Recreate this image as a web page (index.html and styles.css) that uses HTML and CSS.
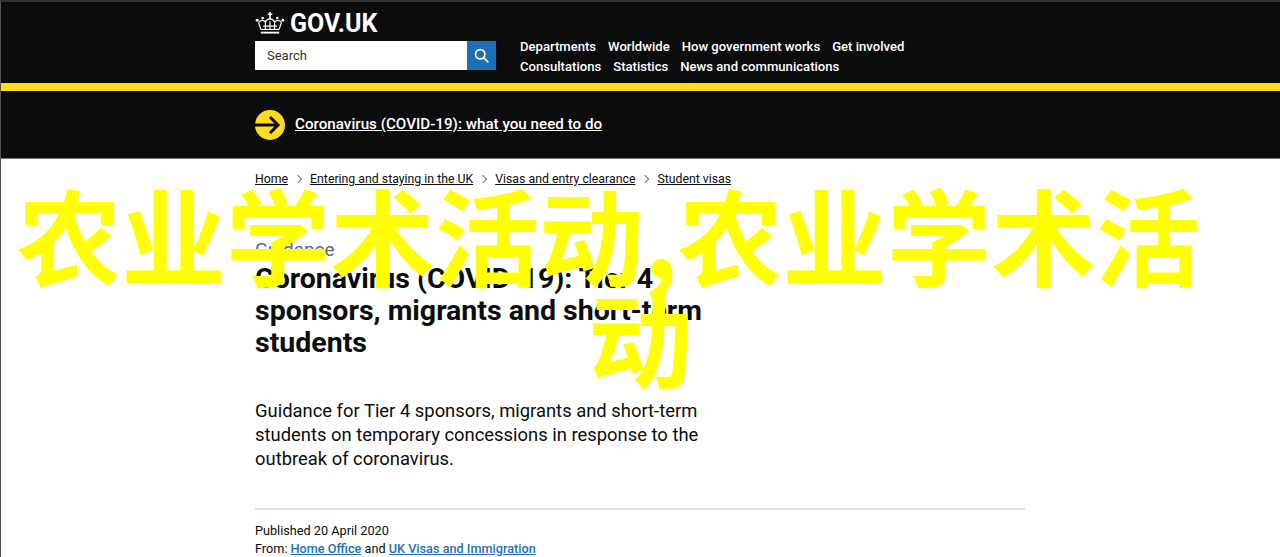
FILE: index.html
```html
<!DOCTYPE html>
<html lang="zh">
<head>
    <meta charset="UTF-8">
    <meta name="viewport" content="width=device-width, initial-scale=1.0">
    <title>农业学术活动</title>
    <link rel="stylesheet" href="styles.css">
</head>
<body>
    <div class="page">
        <header class="top-header">
            <div class="wrap">
                <div class="logo">
                    <svg class="crown" viewBox="0 0 32 24" width="30" height="22" fill="none" stroke="#fff" stroke-width="1.3">
                        <path d="M16 0v8M13.500 2.500h5" stroke-width="1.800"/>
                        <path d="M6 22.500h20" stroke-width="2"/>
                        <path d="M6 19h20"/>
                        <path d="M6 19 3.500 11.500M26 19l2.500-7.500M11 19v-8M21 19v-8M16 19v-9M8.500 15.500h15"/>
                        <path d="M3.500 11.500c2-3 5.500-3 7.500-.5 1-2.500 3-3.500 5-3.500s4 1 5 3.500c2-2.500 5.500-2.500 7.500.5"/>
                        <circle cx="2" cy="9" r="1.600" fill="#fff" stroke="none"/>
                        <circle cx="30" cy="9" r="1.600" fill="#fff" stroke="none"/>
                        <circle cx="8" cy="6.500" r="1.400" fill="#fff" stroke="none"/>
                        <circle cx="24" cy="6.500" r="1.400" fill="#fff" stroke="none"/>
                    </svg>
                    <span class="logo-text">GOV.UK</span>
                </div>
                <div class="header-row">
                    <div class="search">
                        <div class="search-input">Search</div>
                        <div class="search-btn">
                            <svg viewBox="0 0 20 20" width="17" height="17" fill="none" stroke="#fff" stroke-width="2">
                                <circle cx="8.500" cy="8.500" r="5.500"/>
                                <path d="M12.500 12.500 18 18"/>
                            </svg>
                        </div>
                    </div>
                    <nav class="top-nav">
                        <div class="nav-line">
                            <a>Departments</a>
                            <a>Worldwide</a>
                            <a>How government works</a>
                            <a>Get involved</a>
                        </div>
                        <div class="nav-line">
                            <a>Consultations</a>
                            <a>Statistics</a>
                            <a>News and communications</a>
                        </div>
                    </nav>
                </div>
            </div>
        </header>
        <div class="yellow-bar"></div>
        <div class="covid-banner">
            <div class="wrap banner-row">
                <svg class="arrow-icon" viewBox="0 0 30 30" width="30" height="30">
                    <circle cx="15" cy="15" r="15" fill="#ffdd1a"/>
                    <path d="M0 15h23M15 7l8 8-8 8" fill="none" stroke="#0b0c0c" stroke-width="3"/>
                </svg>
                <a class="banner-link">Coronavirus (COVID-19): what you need to do</a>
            </div>
        </div>
        <main class="wrap content">
            <div class="breadcrumbs">
                <a>Home</a><span class="chevron"></span>
                <a>Entering and staying in the UK</a><span class="chevron"></span>
                <a>Visas and entry clearance</a><span class="chevron"></span>
                <a>Student visas</a>
            </div>
            <div class="caption">Guidance</div>
            <h1 class="doc-title">Coronavirus (COVID-19): Tier 4 sponsors, migrants and short-term students</h1>
            <p class="lead">Guidance for Tier 4 sponsors, migrants and short-term students on temporary concessions in response to the outbreak of coronavirus.</p>
            <div class="meta">
                <div>Published 20 April 2020</div>
                <div>From: <a class="meta-link">Home Office</a> and <a class="meta-link">UK Visas and Immigration</a></div>
            </div>
        </main>
        <div class="big-title">
            <div class="big-line">农业学术活动,农业学术活</div>
            <div>动</div>
        </div>
    </div>
</body>
</html>
```

FILE: styles.css
```css
html, body {
    margin: 0;
    padding: 0;
    height: 100%;
    overflow: hidden;
}
body {
    font-family: Roboto, Arial, sans-serif;
    background: #fff;
    color: #0b0c0c;
}
a {
    color: inherit;
}
.page {
    position: relative;
    height: 557px;
    overflow: hidden;
    border-left: 1px solid #555;
    border-top: 2px solid #333;
    box-sizing: border-box;
}
.wrap {
    width: 770px;
    margin-left: 254px;
}
.top-header {
    background: #0b0c0c;
    height: 81px;
    box-sizing: border-box;
    padding-top: 7px;
}
.logo {
    display: flex;
    align-items: center;
    gap: 5px;
    height: 28px;
}
.logo-text {
    color: #fff;
    font-size: 25px;
    font-weight: 700;
}
.header-row {
    display: flex;
    margin-top: 4px;
}
.search {
    display: flex;
    width: 241px;
    height: 29px;
}
.search-input {
    width: 212px;
    background: #fff;
    font-size: 13px;
    line-height: 29px;
    padding-left: 12px;
    box-sizing: border-box;
    color: #333;
}
.search-btn {
    width: 29px;
    background: #1d70b8;
    display: flex;
    align-items: center;
    justify-content: center;
}
.top-nav {
    margin-left: 24px;
    color: #fff;
    font-size: 13.100px;
    font-weight: 500;
    margin-top: -4px;
}
.nav-line {
    display: flex;
    gap: 12px;
    line-height: 19.500px;
}
.yellow-bar {
    height: 8px;
    background: #ffdd1a;
}
.covid-banner {
    background: #0b0c0c;
    height: 67px;
    border-bottom: 1px solid #777;
}
.banner-row {
    display: flex;
    align-items: center;
    gap: 10px;
    height: 67px;
}
.banner-link {
    color: #fff;
    font-size: 15.200px;
    font-weight: 500;
    text-decoration: underline;
    margin-bottom: 1px;
}
.content {
    padding-top: 11px;
}
.breadcrumbs {
    display: flex;
    align-items: center;
    font-size: 12.300px;
    line-height: 18px;
}
.breadcrumbs a {
    text-decoration: underline;
}
.chevron {
    width: 5px;
    height: 5px;
    border-top: 1px solid #777;
    border-right: 1px solid #777;
    transform: rotate(45deg);
    margin: 0 9px 0 7px;
}
.caption {
    color: #626a6e;
    font-size: 19px;
    line-height: 24px;
    margin-top: 50px;
}
.doc-title {
    width: 470px;
    font-size: 28.500px;
    font-weight: 700;
    line-height: 32px;
    margin: 1px 0 0;
}
.lead {
    width: 470px;
    font-size: 18.400px;
    line-height: 24px;
    margin: 40px 0 0;
}
.meta {
    border-top: 2px solid #e2e2e2;
    margin-top: 37px;
    padding-top: 12px;
    font-size: 12.700px;
    line-height: 18px;
}
.meta-link {
    color: #1d70b8;
    font-weight: 500;
    text-decoration: underline;
}
.big-title {
    position: absolute;
    top: 180px;
    left: 0;
    width: 100%;
    text-align: center;
    color: #ffff00;
    font-family: "Noto Sans CJK SC", sans-serif;
    font-weight: 700;
    font-size: 104.500px;
    line-height: 102px;
}
.big-line {
    padding-right: 64px;
}
```
